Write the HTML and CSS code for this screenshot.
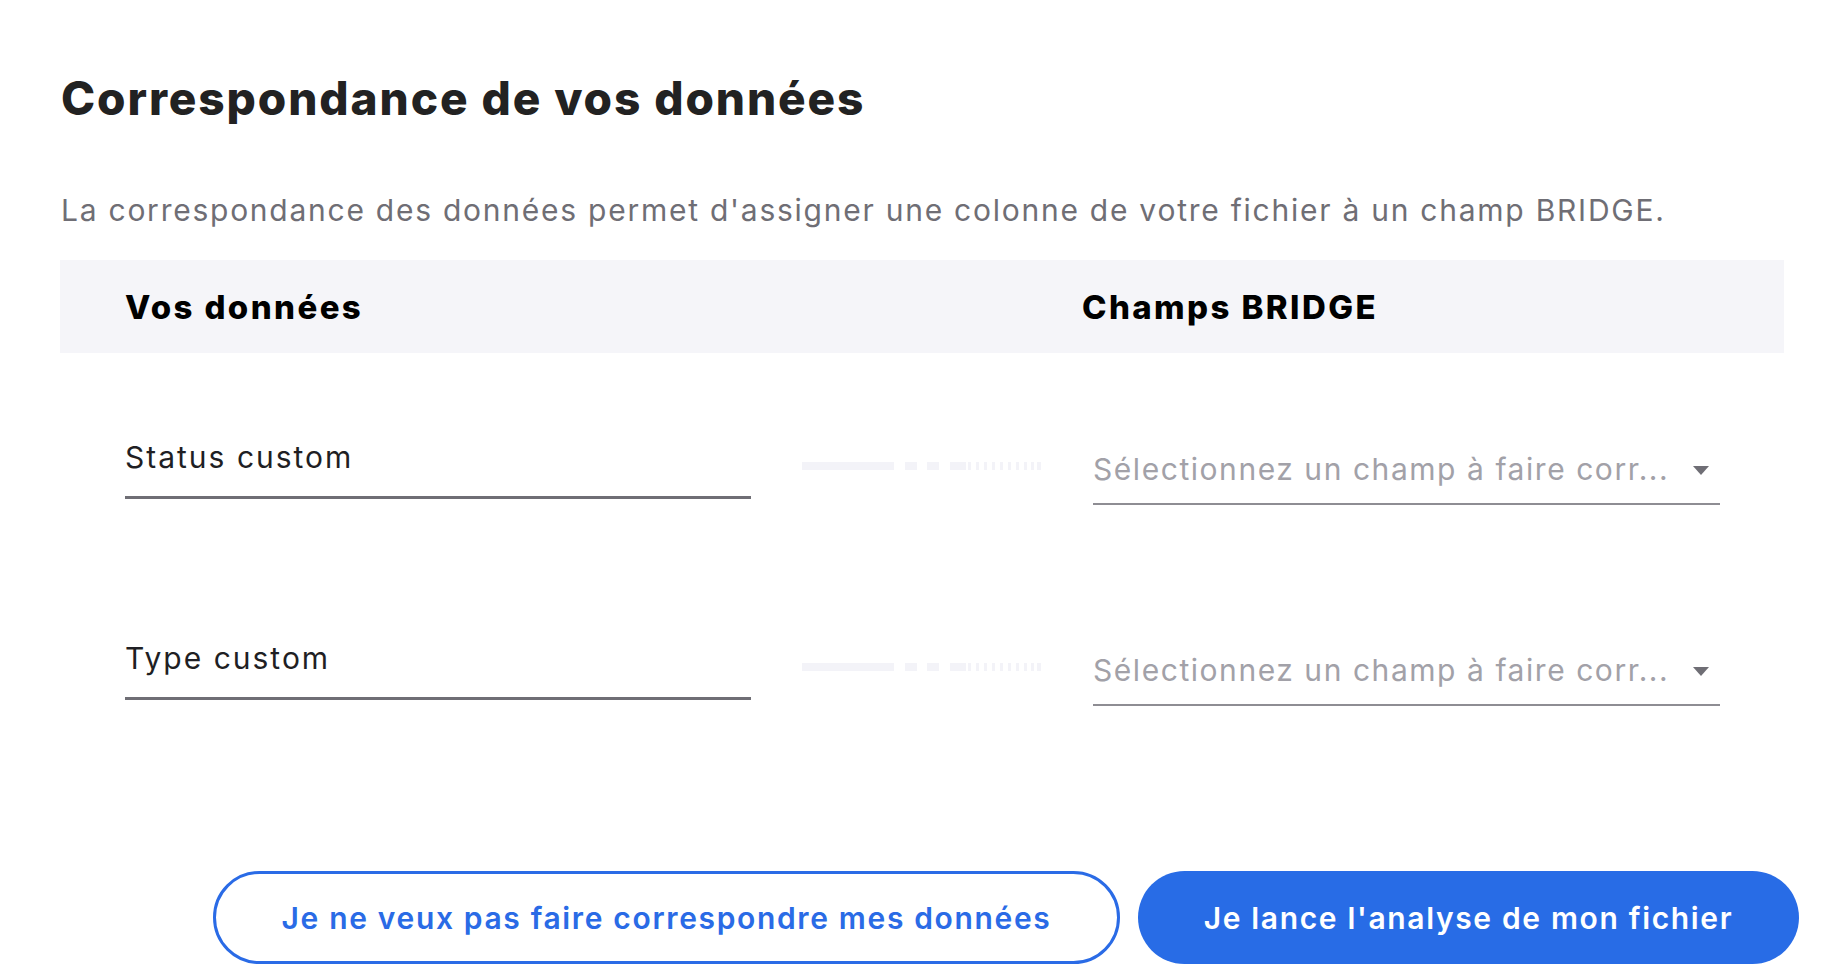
FILE: index.html
```html
<!DOCTYPE html>
<html lang="fr">
<head>
<meta charset="utf-8">
<title>Correspondance de vos données</title>
<link rel="stylesheet" href="styles.css">
</head>
<body>
<main class="modal">
  <h1 class="title">Correspondance de vos données</h1>
  <p class="desc">La correspondance des données permet d'assigner une colonne de votre fichier à un champ BRIDGE.</p>
  <section class="mapping">
    <div class="mapping-head">
      <span class="head-left">Vos données</span>
      <span class="head-right">Champs BRIDGE</span>
    </div>
    <div class="rows">
      <div class="row">
        <div class="source">Status custom</div>
        <div class="link">
          <svg width="240" height="8" viewBox="0 0 240 8"><g fill="#f3f3f8"><rect x="0" y="0" width="92" height="8"/><rect x="103" y="0" width="12" height="8"/><rect x="125" y="0" width="12" height="8"/><rect x="148" y="0" width="16" height="8"/><rect x="166" y="0" width="3" height="8"/><rect x="174" y="0" width="3" height="8"/><rect x="182" y="0" width="3" height="8"/><rect x="190" y="0" width="3" height="8"/><rect x="198" y="0" width="3" height="8"/><rect x="206" y="0" width="3" height="8"/><rect x="214" y="0" width="3" height="8"/><rect x="222" y="0" width="3" height="8"/><rect x="229" y="0" width="3" height="8"/><rect x="235" y="0" width="4" height="8"/></g></svg>
        </div>
        <div class="target">
          <span class="placeholder">Sélectionnez un champ à faire corr...</span>
          <svg class="caret" width="16" height="9" viewBox="0 0 16 9"><path d="M0 0h16L8 9z" fill="#6f6e75"/></svg>
        </div>
      </div>
      <div class="row">
        <div class="source">Type custom</div>
        <div class="link">
          <svg width="240" height="8" viewBox="0 0 240 8"><g fill="#f3f3f8"><rect x="0" y="0" width="92" height="8"/><rect x="103" y="0" width="12" height="8"/><rect x="125" y="0" width="12" height="8"/><rect x="148" y="0" width="16" height="8"/><rect x="166" y="0" width="3" height="8"/><rect x="174" y="0" width="3" height="8"/><rect x="182" y="0" width="3" height="8"/><rect x="190" y="0" width="3" height="8"/><rect x="198" y="0" width="3" height="8"/><rect x="206" y="0" width="3" height="8"/><rect x="214" y="0" width="3" height="8"/><rect x="222" y="0" width="3" height="8"/><rect x="229" y="0" width="3" height="8"/><rect x="235" y="0" width="4" height="8"/></g></svg>
        </div>
        <div class="target">
          <span class="placeholder">Sélectionnez un champ à faire corr...</span>
          <svg class="caret" width="16" height="9" viewBox="0 0 16 9"><path d="M0 0h16L8 9z" fill="#6f6e75"/></svg>
        </div>
      </div>
    </div>
  </section>
  <div class="actions">
    <button class="btn btn-outline">Je ne veux pas faire correspondre mes données</button>
    <button class="btn btn-primary">Je lance l'analyse de mon fichier</button>
  </div>
</main>
</body>
</html>
```
FILE: styles.css
```css
* { box-sizing: border-box; }
html, body {
  margin: 0;
  padding: 0;
  background: #ffffff;
}
body {
  font-family: Inter, "Noto Sans", "Liberation Sans", sans-serif;
  color: #222222;
  width: 1846px;
  height: 976px;
  overflow: hidden;
}
.modal {
  padding: 71px 47px 0 60px;
}
.title {
  margin: 0;
  font-size: 46px;
  line-height: 54px;
  font-weight: 800;
  color: #222222;
  white-space: nowrap;
  letter-spacing: 1.9px;
  padding-left: 1px;
}
.desc {
  margin: 65px 0 0 0;
  font-size: 30px;
  line-height: 40px;
  font-weight: 400;
  color: #6f6e75;
  white-space: nowrap;
  letter-spacing: 1.75px;
  padding-left: 1px;
}
.mapping {
  margin-top: 30px;
  width: 1724px;
}
.mapping-head {
  height: 93px;
  background: #f5f5f9;
  display: flex;
  align-items: center;
  padding-left: 65px;
}
.head-left, .head-right {
  font-size: 33px;
  font-weight: 800;
  color: #000000;
  white-space: nowrap;
  letter-spacing: 2.4px;
}
.head-left { width: 957px; }
.rows {
  display: flex;
  flex-direction: column;
  gap: 133px;
  margin-top: 84px;
  padding-left: 65px;
}
.row {
  display: flex;
  align-items: flex-start;
}
.source {
  width: 626px;
  font-size: 30px;
  line-height: 40px;
  color: #1f1f24;
  letter-spacing: 2px;
  padding-bottom: 19px;
  border-bottom: 3px solid #6f6e75;
}
.link {
  margin: 25px 51px 0 51px;
  width: 240px;
  height: 8px;
  display: flex;
}
.target {
  margin-top: 12px;
  width: 627px;
  display: flex;
  align-items: center;
  justify-content: space-between;
  padding-bottom: 14px;
  border-bottom: 2px solid #8e8d93;
}
.placeholder {
  font-size: 30px;
  line-height: 40px;
  color: #a2a1a8;
  letter-spacing: 1.55px;
  white-space: nowrap;
}
.caret {
  margin-right: 11px;
  margin-top: 3px;
}
.actions {
  display: flex;
  justify-content: flex-end;
  gap: 18px;
  margin-top: 165px;
}
.btn {
  height: 93px;
  border-radius: 47px;
  font-family: Inter, "Noto Sans", "Liberation Sans", sans-serif;
  font-size: 30px;
  font-weight: 600;
  white-space: nowrap;
  letter-spacing: 1.65px;
  cursor: pointer;
}
.btn-outline {
  width: 907px;
  background: #ffffff;
  color: #2a6be6;
  border: 3px solid #2a6be6;
}
.btn-primary {
  width: 661px;
  background: #286ce6;
  color: #ffffff;
  border: none;
}
```
